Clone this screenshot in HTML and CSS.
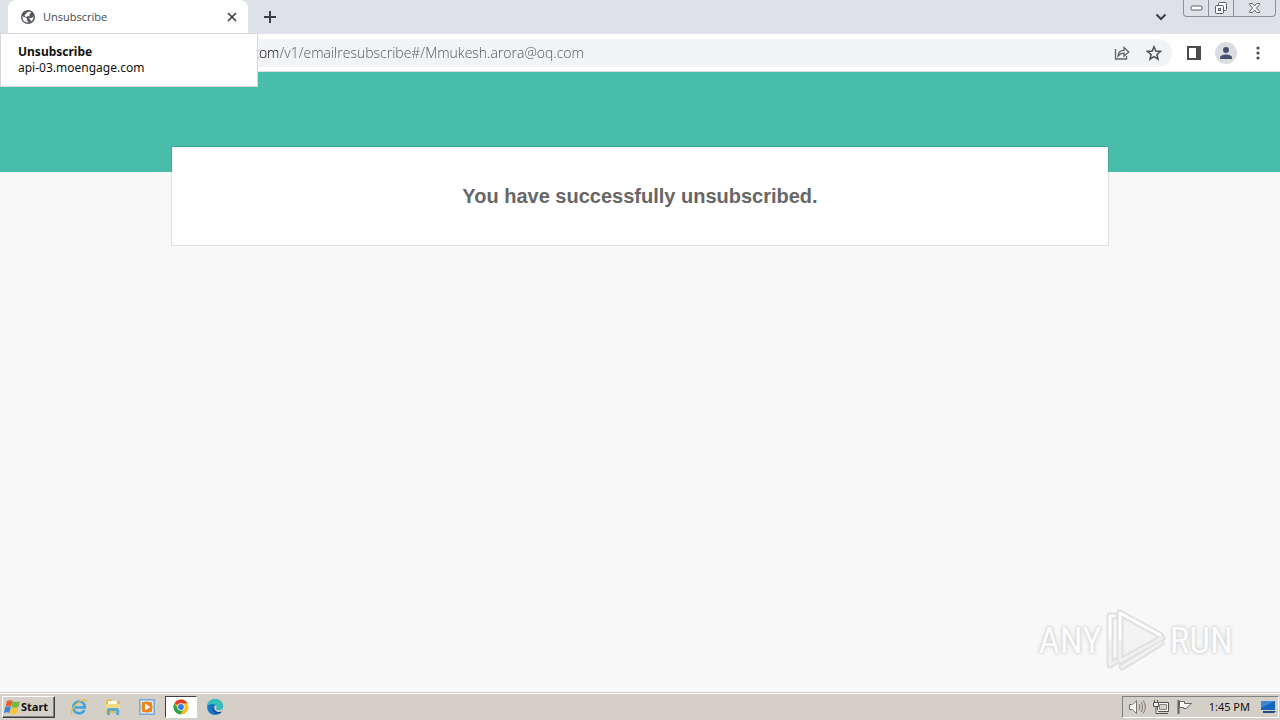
FILE: index.html
```html
<!DOCTYPE html>
<html lang="en">
<head>
  <meta charset="UTF-8" />
  <meta name="viewport" content="width=device-width, initial-scale=1" />
  <title>Unsubscribe</title>
  <link rel="stylesheet" href="styles.css">
</head>
<body>
  <header class="browser">
    <div class="tab-strip">
      <div class="tab">
        <svg class="tab-icon" width="16" height="16" viewBox="0 0 16 16">
          <circle cx="8" cy="8" r="7" fill="#55585c" />
          <path d="M2.500 7.200 7 9.200v2l1.800 2.300C4.500 14 2.200 11 2.500 7.200zM7 3.500c1.500-1 3-1 4.200-.2L9.500 5.500v1.700H7.200L6 8.300 4.500 6.500zM9.300 9h2.400l1.800-1.500c.2 2.500-1 4.300-2.700 5.200V11L9.300 10z" fill="#fff" />
        </svg>
        <span class="tab-title">Unsubscribe</span>
        <button class="icon-btn tab-close" aria-label="Close tab">
          <svg width="10" height="10" viewBox="0 0 10 10"><path d="M1 1l8 8M9 1L1 9" stroke="#3c4043" stroke-width="1.700" /></svg>
        </button>
      </div>
      <button class="icon-btn new-tab" aria-label="New tab">
        <svg width="12" height="12" viewBox="0 0 12 12"><path d="M6 0v12M0 6h12" stroke="#3c4043" stroke-width="2" /></svg>
      </button>
      <button class="icon-btn tab-search" aria-label="Search tabs">
        <svg width="12" height="8" viewBox="0 0 12 8"><path d="M1.500 1.500 6 6l4.500-4.500" fill="none" stroke="#3c4043" stroke-width="2" /></svg>
      </button>
      <div class="window-controls">
        <button aria-label="Minimize">
          <svg width="13" height="6" viewBox="0 0 13 6"><rect x="1" y="1" width="11" height="4" rx="1" fill="#fff" stroke="#5b5f66" /></svg>
        </button>
        <button aria-label="Restore">
          <svg width="14" height="14" viewBox="0 0 14 14" fill="#fff" stroke="#5b5f66">
            <rect x="4.500" y="1.500" width="8" height="8" rx="1" />
            <rect x="1.500" y="4.500" width="8" height="8" rx="1" />
            <rect x="4.500" y="7.500" width="2" height="2" />
          </svg>
        </button>
        <button class="window-close" aria-label="Close">
          <svg width="13" height="12" viewBox="0 0 13 12"><path d="M1.500 1.500h3l2 2.500 2-2.500h3v1L8.500 6l3 3.500v1h-3l-2-2.500-2 2.500h-3v-1l3-3.500-3-3.500z" fill="#fff" stroke="#5b5f66" /></svg>
        </button>
      </div>
    </div>

    <div class="toolbar">
      <div class="address">
        <input type="text" aria-label="Address" value="api-03.moengage.com/v1/emailresubscribe#/Mmukesh.arora@oq.com">
        <button class="icon-btn" aria-label="Share">
          <svg width="16" height="16" viewBox="0 0 16 16" fill="none" stroke="#5f6368" stroke-width="1.300">
            <path d="M1.500 4v10h11v-3M4 11c.3-3.800 2.500-5.700 6-5.700V2.500L14.800 7 10 11V8.200C7.500 8.200 5.600 9 4 11z" />
          </svg>
        </button>
        <button class="icon-btn" aria-label="Bookmark">
          <svg width="16" height="16" viewBox="0 0 16 16"><path d="M8 1.800l1.800 4.300 4.700.4-3.600 3 1.100 4.600L8 11.600l-4 2.500 1.100-4.600-3.600-3 4.700-.4z" fill="none" stroke="#4b4f54" stroke-width="1.500" /></svg>
        </button>
      </div>
      <button class="icon-btn" aria-label="Side panel">
        <svg width="14" height="14" viewBox="0 0 14 14"><path d="M1 1h12v12H1z" fill="#fff" stroke="#4b4c50" stroke-width="2" /><path d="M9 1h4v12H9z" fill="#4b4c50" /></svg>
      </button>
      <button class="icon-btn" aria-label="Profile">
        <svg width="22" height="22" viewBox="0 0 22 22"><circle cx="11" cy="11" r="11" fill="#dadde2" /><circle cx="11" cy="8" r="3" fill="#47526f" /><path d="M5 17v-1.500C5 13.400 8.500 12.500 11 12.500s6 .9 6 3V17z" fill="#47526f" /></svg>
      </button>
      <button class="icon-btn" aria-label="Menu">
        <svg width="4" height="14" viewBox="0 0 4 14" fill="#4b4f54"><circle cx="2" cy="2" r="1.600" /><circle cx="2" cy="7" r="1.600" /><circle cx="2" cy="12" r="1.600" /></svg>
      </button>
    </div>

    <div class="tab-tooltip">
      <strong>Unsubscribe</strong>
      <span>api-03.moengage.com</span>
    </div>
  </header>

  <main class="page">
    <div class="banner"></div>
    <div class="card">
      <h1>You have successfully unsubscribed.</h1>
    </div>
    <div class="watermark">
      <span>ANY</span>
      <svg width="60" height="64" viewBox="0 0 60 64" fill="none" stroke-linejoin="round" stroke-linecap="round">
        <path d="M16 6v52l42-26z" fill="#f3f3f3" />
        <g stroke="#e0e0e0" stroke-width="7">
          <path d="M8 8H4v49l6-4" />
          <path d="M54 27 14 5v48l42-23" />
          <path d="M16 59 55 35" />
        </g>
        <g stroke="#fff" stroke-width="3">
          <path d="M8 8H4v24" />
          <path d="M54 27 14 5v27" />
        </g>
        <g stroke="#f1f1f1" stroke-width="3">
          <path d="M4 32v25l6-4" />
          <path d="M14 32v21l42-23" />
          <path d="M16 59 55 35" />
        </g>
      </svg>
      <span>RUN</span>
    </div>
  </main>

  <footer class="taskbar">
    <button class="start">
      <svg width="17" height="16" viewBox="0 0 17 16">
        <path d="M3 2c2-1 4-1 5.500 0L7 7.500C5.500 6.500 3.500 6.500 1.500 7.500z" fill="#e8602c" />
        <path d="M8.700 2.300c2 1 4.500 1 7.300 0L14.500 8c-2.500 1-5 1-7.200 0z" fill="#79b83c" />
        <path d="M1.200 8c2-1 4-1 5.700 0L5.200 14C3.700 13 2 13 0 14z" fill="#3f86d8" />
        <path d="M7.200 8.400c2 1 4.500 1 7 .2l-1.500 5.900c-2.500 1-5 1-7 0z" fill="#f5c338" />
      </svg>
      Start
    </button>
    <div class="quick-launch">
      <button aria-label="Internet Explorer">
        <svg width="18" height="18" viewBox="0 0 18 18" fill="none">
          <path d="M14.500 12c-1 2-3 3.200-5.300 3.200-3.400 0-5.900-2.500-5.900-5.800S5.900 3.600 9.300 3.600s5.700 2.500 5.600 6H5" stroke="#3ba3e0" stroke-width="2.500" />
          <path d="M2.500 16.500C-.5 14 4 7 9 4s8-3.500 7.500 0" stroke="#e9bd3c" stroke-width="1.300" />
        </svg>
      </button>
      <button aria-label="Explorer">
        <svg width="18" height="18" viewBox="0 0 18 18">
          <path d="M2 2l5-1 1 2h8v12H2z" fill="#dfbc58" />
          <path d="M4 3h9v7H4z" fill="#fffbe2" />
          <path d="M2 6h14v6H2z" fill="#f2d983" />
          <path d="M3 17v-5c0-2 2-2 3-2h6c2 0 3 0 3 2v5h-3v-4H6v4z" fill="#5aacd2" />
        </svg>
      </button>
      <button aria-label="Media Player">
        <svg width="18" height="18" viewBox="0 0 18 18">
          <path d="M1 1h16v16H1z" fill="#79a9d5" />
          <path d="M2.500 2.500h13v13h-13z" fill="#d7e8f4" />
          <path d="M4 4h10v10H4z" fill="#f19024" />
          <circle cx="9" cy="9" r="5.500" fill="#f08214" />
          <path d="M7 5.500 12.500 9 7 12.500z" fill="#fff" />
        </svg>
      </button>
      <button class="active" aria-label="Chrome">
        <svg width="16" height="16" viewBox="0 0 16 16">
          <circle cx="8" cy="8" r="7.500" fill="#fbc116" />
          <path d="M8 8 1.500 4.200A7.500 7.500 0 0 1 14.500 4.300L8 4.500z" fill="#e33b2e" />
          <path d="M1.500 4.200A7.500 7.500 0 0 0 7.500 15.500L11 9.800 8 8 5 9.700z" fill="#2da44e" />
          <circle cx="8" cy="8" r="3.700" fill="#fff" />
          <circle cx="8" cy="8" r="2.900" fill="#3b78e7" />
        </svg>
      </button>
      <button aria-label="Edge">
        <svg width="18" height="18" viewBox="0 0 18 18">
          <circle cx="9" cy="9" r="8" fill="#1676c8" />
          <path d="M1 9C1 4 5 1 9 1c5 0 8 3.500 8 7 0 3-2.500 4-5 4-2 0-2.500-1-1.500-2C11 7 8 5.500 5.500 6 3 6.500 1.500 8 1 9z" fill="#36c0ba" />
          <path d="M7 8c-2 4 1 7.500 6 7.500 1.500 0 2.200-1 3-2-1 .4-2 .5-3 .5-3 0-6-2-6-6z" fill="#124f94" />
          <path d="M8.500 7.500c2 0 2.800 1.300 2 2.500-1 1-.5 2 1.500 2 2 0 4-.5 5-2.500-.2 1.800-.7 3-1.500 4-4 1.500-8.500-1-7-6z" fill="#d4d0c8" />
        </svg>
      </button>
    </div>
    <div class="tray">
      <svg width="18" height="16" viewBox="0 0 18 16" fill="#fff" stroke="#77746e">
        <path d="M1.500 5.500h3l4-4v13l-4-4h-3z" />
        <path d="M11 5c1 2 1 4 0 6M13 3c2 3 2 7 0 10M15 1.500c3 4 3 9 0 13" fill="none" />
      </svg>
      <svg width="18" height="16" viewBox="0 0 18 16" fill="#f5f4f0" stroke="#55534f">
        <path d="M5.500 3.500h11v9h-11zM7 14.500h9" />
        <path d="M7.500 5.500h7v5h-7z" fill="#d4d0c8" stroke="#8b8882" />
        <path d="M1.500 3.500h5v4h-5zM2.500 1v2M5.500 1v2M4 8v6.500h3" />
      </svg>
      <svg width="18" height="16" viewBox="0 0 18 16" fill="#fff" stroke="#66635e">
        <path d="M2.500 1v14" stroke-width="2" />
        <path d="M3.500 2.500h5v2h7l-3 2.500-2 2.500h-3v-1h-4z" />
      </svg>
      <time>1:45 PM</time>
      <svg width="18" height="16" viewBox="0 0 18 16">
        <path d="M2 2h14v9H2z" fill="#1664bb" />
        <path d="M2 2h14L2 9z" fill="#3c87d6" />
        <path d="M4 12h13l-2 2H4z" fill="#234a7c" />
      </svg>
    </div>
  </footer>
</body>
</html>
```
FILE: styles.css
```css
* {
  box-sizing: border-box;
}

body {
  margin: 0;
  min-height: 100vh;
  display: flex;
  flex-direction: column;
  background-color: #f8f8f8;
  font-family: "Noto Sans", sans-serif;
  font-size: 12px;
  color: #111;
}

button {
  padding: 0;
  border: 0;
  background: none;
  font: inherit;
  color: inherit;
}

svg {
  display: block;
}

.icon-btn {
  display: flex;
  align-items: center;
  justify-content: center;
  width: 24px;
  height: 24px;
}

.browser {
  position: relative;
  border-bottom: 1px solid #dcdfe2;
}

/* tabs */
.tab-strip {
  display: flex;
  align-items: center;
  height: 34px;
  padding: 0 4px 0 8px;
  background-color: #dee1e8;
}

.tab {
  display: flex;
  align-items: center;
  width: 240px;
  height: 34px;
  padding: 0 4px 0 12px;
  background-color: #fff;
  border-radius: 8px 8px 0 0;
}

.tab-title {
  flex: 1;
  margin-left: 7px;
  font-family: "Open Sans", sans-serif;
  font-size: 11px;
  line-height: 16px;
  color: #45484c;
}

.new-tab {
  margin-left: 10px;
}

.tab-search {
  margin-left: auto;
}

.window-controls {
  display: flex;
  align-self: flex-start;
  height: 17px;
  margin-left: 10px;
  border: 1px solid #8c9097;
  border-top: 0;
  border-radius: 0 0 4px 4px;
}

.window-controls button {
  display: flex;
  align-items: center;
  justify-content: center;
  width: 25px;
  border-right: 1px solid #8c9097;
}

.window-controls .window-close {
  width: 41px;
  border-right: 0;
}

/* address bar */
.toolbar {
  display: flex;
  align-items: center;
  gap: 8px;
  height: 37px;
  padding: 0 10px;
  background-color: #fff;
}

.address {
  flex: 1;
  display: flex;
  align-items: center;
  gap: 8px;
  height: 28px;
  margin: 0 2px 0 90px;
  padding: 0 6px 0 40px;
  background-color: #f1f3f6;
  border-radius: 14px;
}

.address input {
  flex: 1;
  min-width: 0;
  padding: 0;
  border: 0;
  outline: 0;
  font-family: "Open Sans", "Noto Sans", sans-serif;
  font-size: 14px;
  font-weight: 300;
  /* the host is darker than the path */
  background: linear-gradient(90deg, #000 138px, #4c5054 138px);
  -webkit-background-clip: text;
  background-clip: text;
  color: transparent;
}

.tab-tooltip {
  position: absolute;
  top: 33px;
  left: 0;
  display: flex;
  flex-direction: column;
  width: 258px;
  height: 54px;
  padding: 10px 17px;
  background-color: #fff;
  border: 1px solid #d5d8dc;
  line-height: 16px;
  z-index: 10;
}

/* page */
.page {
  position: relative;
  flex: 1;
}

.banner {
  height: 100px;
  background-color: #48bda9;
}

.card {
  width: calc(100% - 342px);
  margin: -26px auto 0;
  padding: 36px 20px 35px;
  background-color: #fff;
  background-clip: padding-box;
  border: 1px solid rgba(0, 0, 0, 0.1);
  text-align: center;
}

.card h1 {
  margin: 0;
  font-family: "Liberation Sans", Arial, sans-serif;
  font-size: 20px;
  line-height: 27px;
  color: #666;
}

.watermark {
  position: absolute;
  right: 47px;
  bottom: 20px;
  display: flex;
  align-items: center;
  gap: 4px;
  font-family: "Roboto Condensed", "Liberation Sans Narrow", "Liberation Sans", sans-serif;
  font-size: 37px;
  color: #fcfcfc;
  text-shadow: 0 0 2px #ccc, 0 0 4px #ccc;
}

/* taskbar */
.taskbar {
  display: flex;
  align-items: center;
  height: 28px;
  padding: 1px 1px 1px 2px;
  background-color: #d4d0c8;
  border-top: 1px solid #d4d0c8;
  box-shadow: inset 0 1px #fff;
}

.start {
  display: flex;
  align-items: center;
  width: 53px;
  height: 22px;
  padding-left: 1px;
  border: 1px solid;
  border-color: #fff #404040 #404040 #fff;
  box-shadow: inset -1px -1px #808080;
  font-weight: bold;
  font-size: 11px;
}

.quick-launch {
  display: flex;
  gap: 2px;
  margin-left: 8px;
}

.quick-launch button {
  display: flex;
  align-items: center;
  justify-content: center;
  width: 32px;
  height: 22px;
}

.quick-launch .active {
  background-color: #fff;
  border: 1px solid;
  border-color: #404040 #fff #fff #404040;
}

.tray {
  display: flex;
  align-items: center;
  gap: 6px;
  height: 22px;
  margin-left: auto;
  padding: 0 1px 0 5px;
  border: 1px solid;
  border-color: #808080 #fff #fff #808080;
}

.tray time {
  margin: 0 3px 0 9px;
  font-size: 11px;
}
```
